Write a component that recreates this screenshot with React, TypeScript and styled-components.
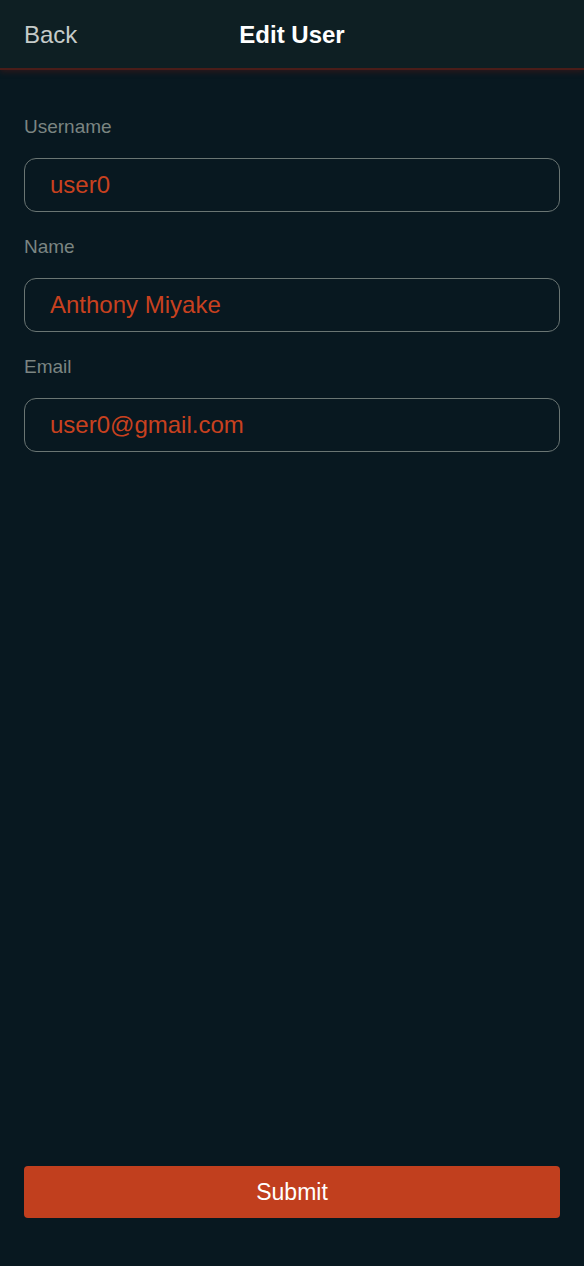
import React from "react";
import styled, { createGlobalStyle } from "styled-components";

const Global = createGlobalStyle`
  html, body { margin: 0; padding: 0; background: #081820; }
  body { font-family: "Liberation Sans", Arial, sans-serif; }
  * { box-sizing: border-box; }
`;

const Page = styled.div`
  min-height: 1266px;
  display: flex;
  flex-direction: column;
  background: #081820;
`;

const Header = styled.header`
  height: 70px;
  display: grid;
  grid-template-columns: 1fr auto 1fr;
  align-items: center;
  padding: 2px 24px 0;
  background: #0e1f23;
  border-bottom: 2px solid #4a1d19;
  box-shadow: 0 2px 6px rgba(90, 25, 20, 0.45);
  position: relative;
  z-index: 1;
`;

const BackButton = styled.button`
  justify-self: start;
  background: none;
  border: none;
  padding: 0;
  font: inherit;
  font-size: 24px;
  color: #c5cbc9;
  cursor: pointer;
`;

const Title = styled.h1`
  margin: 0;
  font-size: 24px;
  font-weight: 700;
  color: #ffffff;
`;

const Form = styled.form`
  flex: 1;
  display: flex;
  flex-direction: column;
  padding: 0 24px 48px;
`;

const Fields = styled.div`
  display: flex;
  flex-direction: column;
  padding-top: 46px;
  gap: 24px;
`;

const Field = styled.label`
  display: flex;
  flex-direction: column;
  gap: 20px;
`;

const LabelText = styled.span`
  font-size: 19px;
  color: #7b8582;
  line-height: 22px;
`;

const Input = styled.input`
  height: 54px;
  width: 100%;
  background: #081820;
  border: 1.5px solid #6a7573;
  border-radius: 12px;
  padding: 0 25px;
  font-family: "Liberation Sans", Arial, sans-serif;
  font-size: 24px;
  color: #c8411f;
  outline: none;
`;

const Spacer = styled.div`
  flex: 1;
`;

const SubmitButton = styled.button`
  height: 52px;
  width: 100%;
  border: none;
  border-radius: 4px;
  background: #c13f1e;
  color: #ffffff;
  font-family: "Liberation Sans", Arial, sans-serif;
  font-size: 23px;
  cursor: pointer;
`;

const fields = [
  { label: "Username", value: "user0" },
  { label: "Name", value: "Anthony Miyake" },
  { label: "Email", value: "user0@gmail.com" },
];

export default function App() {
  return (
    <>
      <Global />
      <Page>
        <Header>
          <BackButton type="button">Back</BackButton>
          <Title>Edit User</Title>
          <span />
        </Header>
        <Form onSubmit={(e) => e.preventDefault()}>
          <Fields>
            {fields.map((f) => (
              <Field key={f.label}>
                <LabelText>{f.label}</LabelText>
                <Input defaultValue={f.value} />
              </Field>
            ))}
          </Fields>
          <Spacer />
          <SubmitButton type="submit">Submit</SubmitButton>
        </Form>
      </Page>
    </>
  );
}
